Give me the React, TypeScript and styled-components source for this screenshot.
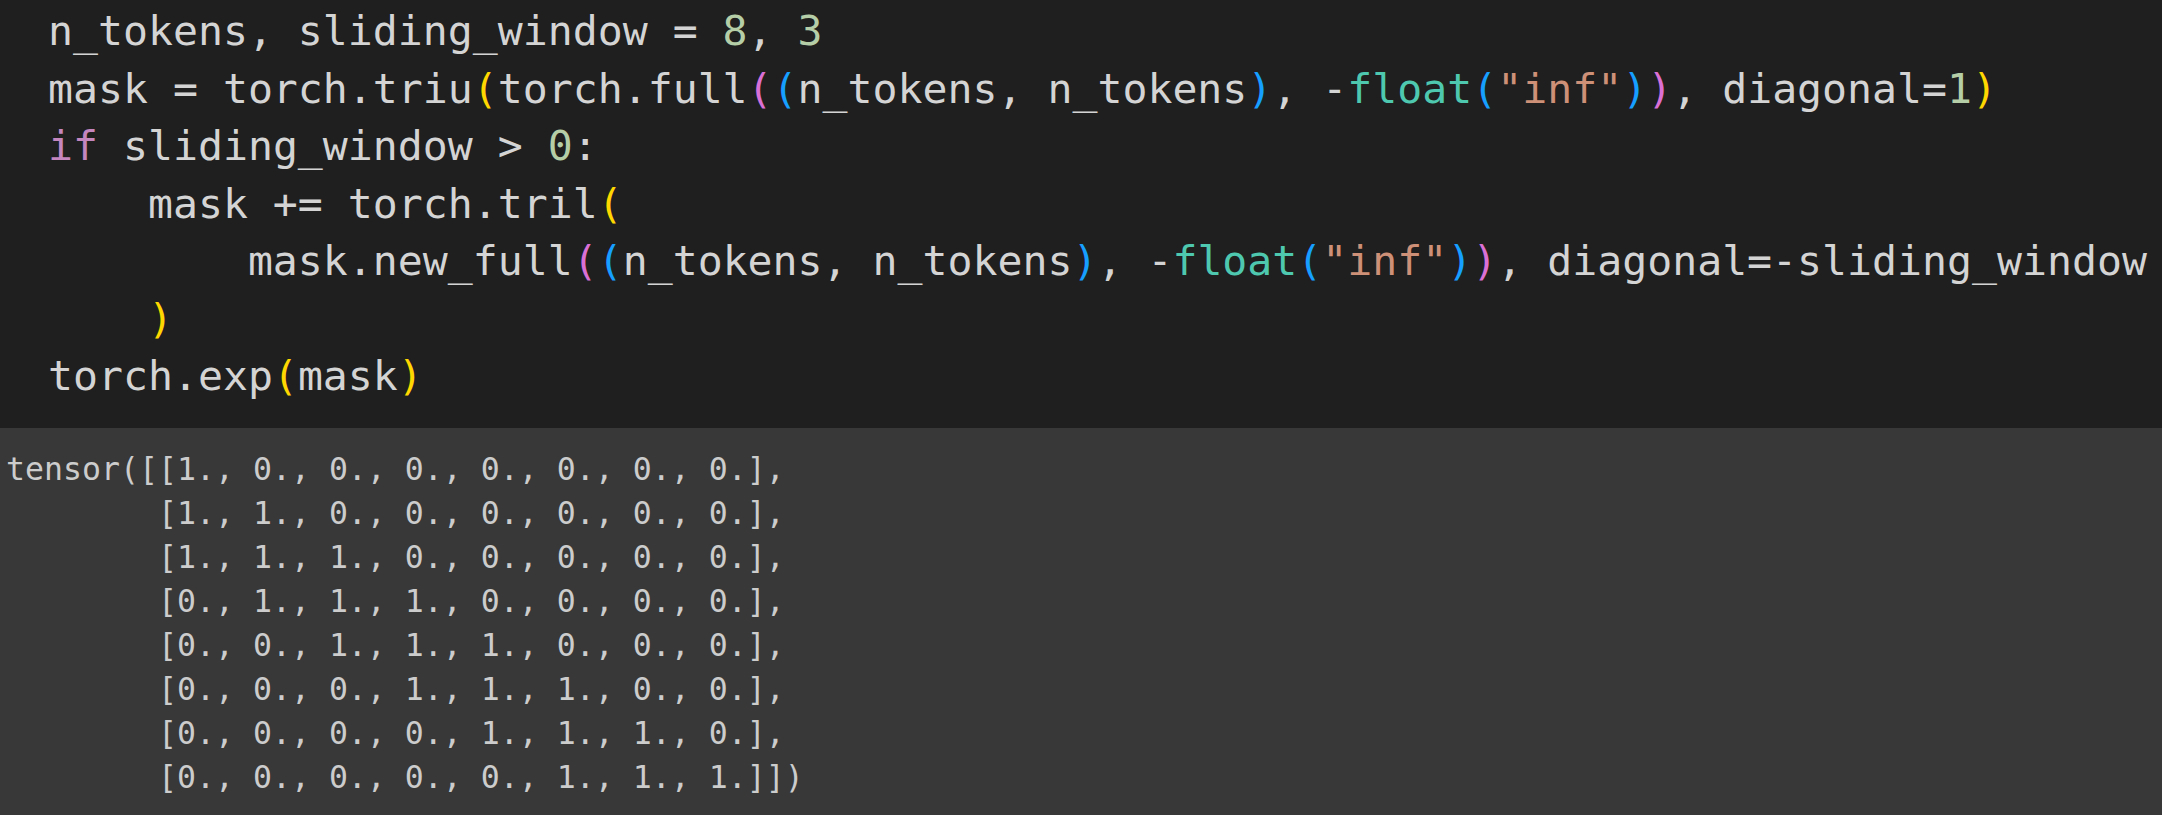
import React from "react";
import styled, { createGlobalStyle } from "styled-components";

const GlobalStyle = createGlobalStyle`
  html, body {
    margin: 0;
    padding: 0;
    background: #383838;
  }
  #root {
    width: 2162px;
    height: 815px;
    overflow: hidden;
  }
`;

type Kind = "plain" | "kw" | "num" | "str" | "fn" | "b1" | "b2" | "b3";

const colors: Record<Kind, string> = {
  plain: "#d4d4d4",
  kw: "#c586c0",
  num: "#b5cea8",
  str: "#ce9178",
  fn: "#4ec9b0",
  b1: "#ffd700",
  b2: "#da70d6",
  b3: "#179fff",
};

const Cell = styled.div`
  display: flex;
  flex-direction: column;
  width: 2162px;
  height: 815px;
`;

const Editor = styled.div`
  background: #1f1f1f;
  padding: 2px 0 23.5px 48px;
  font-family: "DejaVu Sans Mono", "Liberation Mono", monospace;
  font-size: 41.5px;
  line-height: 57.5px;
  white-space: pre;
  overflow: hidden;
`;

const Line = styled.div`
  height: 57.5px;
`;

const Token = styled.span<{ $kind: Kind }>`
  color: ${(p) => colors[p.$kind]};
`;

const Output = styled.pre`
  flex: 1;
  margin: 0;
  background: #383838;
  color: #cccccc;
  padding: 19px 0 0 6px;
  font-family: "DejaVu Sans Mono", "Liberation Mono", monospace;
  font-size: 31.55px;
  line-height: 44px;
  white-space: pre;
  overflow: hidden;
`;

type Tok = [Kind, string];

const code: Tok[][] = [
  [["plain", "n_tokens, sliding_window = "], ["num", "8"], ["plain", ", "], ["num", "3"]],
  [
    ["plain", "mask = torch.triu"], ["b1", "("], ["plain", "torch.full"], ["b2", "("], ["b3", "("],
    ["plain", "n_tokens, n_tokens"], ["b3", ")"], ["plain", ", -"], ["fn", "float"], ["b3", "("],
    ["str", "\"inf\""], ["b3", ")"], ["b2", ")"], ["plain", ", diagonal="], ["num", "1"], ["b1", ")"],
  ],
  [["kw", "if"], ["plain", " sliding_window > "], ["num", "0"], ["plain", ":"]],
  [["plain", "    mask += torch.tril"], ["b1", "("]],
  [
    ["plain", "        mask.new_full"], ["b2", "("], ["b3", "("], ["plain", "n_tokens, n_tokens"],
    ["b3", ")"], ["plain", ", -"], ["fn", "float"], ["b3", "("], ["str", "\"inf\""], ["b3", ")"],
    ["b2", ")"], ["plain", ", diagonal=-sliding_window"],
  ],
  [["plain", "    "], ["b1", ")"]],
  [["plain", "torch.exp"], ["b1", "("], ["plain", "mask"], ["b1", ")"]],
];

const rows = [
  "1., 0., 0., 0., 0., 0., 0., 0.",
  "1., 1., 0., 0., 0., 0., 0., 0.",
  "1., 1., 1., 0., 0., 0., 0., 0.",
  "0., 1., 1., 1., 0., 0., 0., 0.",
  "0., 0., 1., 1., 1., 0., 0., 0.",
  "0., 0., 0., 1., 1., 1., 0., 0.",
  "0., 0., 0., 0., 1., 1., 1., 0.",
  "0., 0., 0., 0., 0., 1., 1., 1.",
];

const outputText = rows
  .map((r, i) => {
    const prefix = i === 0 ? "tensor([[" : "        [";
    const suffix = i === rows.length - 1 ? "]])" : "],";
    return prefix + r + suffix;
  })
  .join("\n");

export default function App() {
  return (
    <>
      <GlobalStyle />
      <Cell>
        <Editor>
          {code.map((line, i) => (
            <Line key={i}>
              {line.map(([k, t], j) => (
                <Token key={j} $kind={k}>
                  {t}
                </Token>
              ))}
            </Line>
          ))}
        </Editor>
        <Output>{outputText}</Output>
      </Cell>
    </>
  );
}
